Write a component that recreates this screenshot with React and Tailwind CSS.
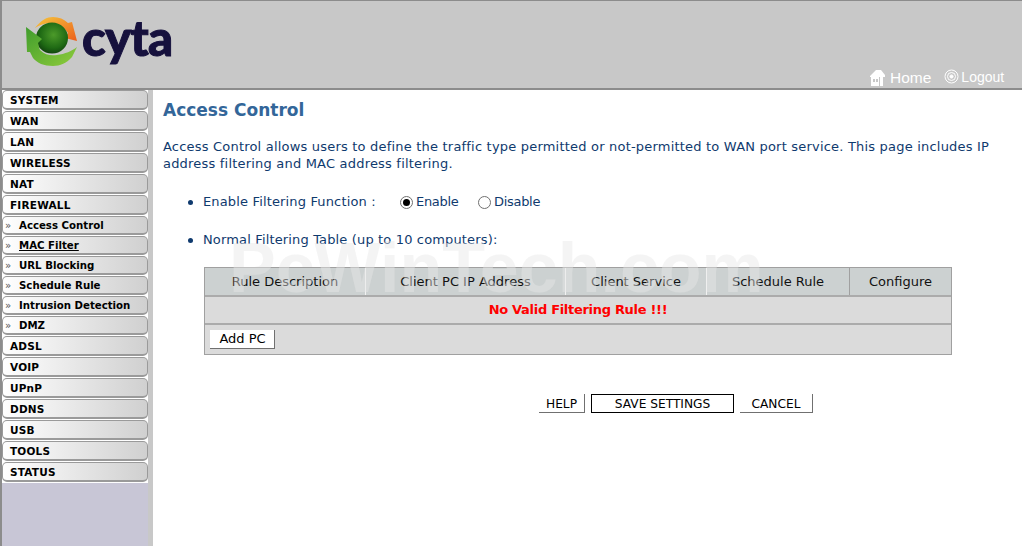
const mainMenu = ["SYSTEM", "WAN", "LAN", "WIRELESS", "NAT", "FIREWALL"];
const subMenu = ["Access Control", "MAC Filter", "URL Blocking", "Schedule Rule", "Intrusion Detection", "DMZ"];
const lowerMenu = ["ADSL", "VOIP", "UPnP", "DDNS", "USB", "TOOLS", "STATUS"];
const columns = [
  { name: "Rule Description", width: "w-[161px]" },
  { name: "Client PC IP Address", width: "w-[200px]" },
  { name: "Client Service", width: "w-[141px]" },
  { name: "Schedule Rule", width: "w-[143px]" },
  { name: "Configure", width: "flex-1" },
];

function Logo() {
  return (
    <div className="flex items-start">
      <svg width="56" height="52" viewBox="0 0 56 52" className="mt-[15px] ml-[23px]">
        <defs>
          <radialGradient id="ball" cx="0.55" cy="0.4" r="0.65">
            <stop offset="0" stopColor="#4c9a2a" />
            <stop offset="0.65" stopColor="#1f6a14" />
            <stop offset="1" stopColor="#0e3d0c" />
          </radialGradient>
          <linearGradient id="orange" x1="0" y1="0" x2="1" y2="1">
            <stop offset="0" stopColor="#f5c63c" />
            <stop offset="1" stopColor="#ec5f1c" />
          </linearGradient>
          <linearGradient id="green" x1="0" y1="0" x2="1" y2="1">
            <stop offset="0" stopColor="#3f9c2c" />
            <stop offset="1" stopColor="#8fcc3c" />
          </linearGradient>
        </defs>
        <path d="M10 12 C16 4 22 1 28 1 C34 1 39 3 43 7 L47 6 L52 25 L40 22 L43 17 C35 5 20 5 10 12 Z" fill="url(#orange)" />
        <ellipse cx="27" cy="22" rx="16" ry="15.5" fill="url(#ball)" />
        <path d="M1 11 L17 23 L13 27 C14 30 14 32 15 34 C20 39 26 40 32 39 C40 38 47 35 52 31 L47 41 C42 47 35 50 28 50 C19 50 12 47 8 42 L5 36 L2 36 Z" fill="url(#green)" />
      </svg>
      <span className="mt-[6px] ml-[1px] font-['Lato',sans-serif] font-black text-[49px] leading-[60px] tracking-[-0.8px] text-[#16113d] [-webkit-text-stroke:1px_#16113d]">cyta</span>
    </div>
  );
}

function MenuItem({ label }) {
  return (
    <div className="h-[21px] pb-[1px]">
      <div className="h-[20px] rounded-[5px] border border-b-2 border-[#9a9a9a] bg-gradient-to-r from-white to-[#d0d0d0] pl-[7px] text-[10.5px] font-bold leading-[19px] tracking-[0.2px] text-black">
        {label}
      </div>
    </div>
  );
}

function SubItem({ label }) {
  return (
    <div className="h-[20px] pb-[1px]">
      <div className="flex h-[19px] items-center rounded-[5px] border border-b-2 border-[#9a9a9a] bg-gradient-to-r from-white to-[#d0d0d0] pt-[1px] pl-[2px] text-[10.2px] font-bold text-black">
        <span className="w-[14px] font-normal text-[#555]">»</span>
        <span className={label === "MAC Filter" ? "underline" : ""}>{label}</span>
      </div>
    </div>
  );
}

function Radio({ checked }) {
  return (
    <span className="flex h-[13px] w-[13px] items-center justify-center rounded-full border border-[#707070] bg-white">
      {checked && <span className="h-[7px] w-[7px] rounded-full bg-black" />}
    </span>
  );
}

export default function App() {
  return (
    <div className="relative h-[546px] w-[1022px] overflow-hidden bg-white font-['DejaVu_Sans',sans-serif]">
      <header className="relative h-[90px] border-t border-b-2 border-l-2 border-[#8c8c8c] bg-[#c8c8c8]">
        <Logo />
        <div className="absolute left-[866px] top-[65px] flex items-center text-white">
          <svg width="18" height="18" viewBox="0 0 18 18" fill="#fff">
            <path d="M2 7 L8 1 L13 1 L17 6 L17 8 L15 8 L15 17 L12 17 L12 8 L11 8 L11 17 L3 17 L3 8 L2 8 Z" />
            <rect x="5" y="10" width="2" height="3" fill="#c8c8c8" />
            <rect x="8" y="10" width="2" height="3" fill="#c8c8c8" />
          </svg>
          <span className="ml-[4px] text-[15.5px] leading-[24px] font-['Liberation_Sans',sans-serif]">Home</span>
          <svg width="15" height="15" viewBox="0 0 15 15" fill="none" stroke="#fff" className="ml-[13px] mt-[-3px]">
            <circle cx="7.5" cy="7.5" r="6.5" />
            <circle cx="7.5" cy="7.5" r="4" />
            <circle cx="7.5" cy="7.5" r="1.6" fill="#fff" />
          </svg>
          <span className="ml-[2px] mt-[-3px] text-[14px] leading-[20px] font-['Liberation_Sans',sans-serif]">Logout</span>
        </div>
      </header>

      <div className="flex h-[456px]">
        <aside className="flex w-[153px] border-l-2 border-[#8c8c8c] bg-[#c8c8c8]">
          <nav className="flex w-[146px] flex-col bg-[#c8c6d6]">
            <div className="bg-white">
              {mainMenu.map((item) => <MenuItem key={item} label={item} />)}
              {subMenu.map((item) => <SubItem key={item} label={item} />)}
              {lowerMenu.map((item) => <MenuItem key={item} label={item} />)}
            </div>
          </nav>
        </aside>

        <main className="flex-1 pl-[10px] text-[13px] text-[#0f3a6e]">
          <h1 className="mt-[9px] text-[17px] font-bold leading-[22px] text-[#336699]">Access Control</h1>
          <p className="mt-[17px] w-[850px] leading-[17px] tracking-[0.2px]">
            Access Control allows users to define the traffic type permitted or not-permitted to WAN port service. This page includes IP address filtering and MAC address filtering.
          </p>

          <div className="mt-[20px] flex h-[20px] items-center tracking-[0.15px]">
            <span className="ml-[25px] h-[5px] w-[5px] rounded-full bg-[#0f3a6e]" />
            <span className="ml-[10px] w-[197px]">Enable Filtering Function :</span>
            <Radio checked />
            <span className="ml-[3px] w-[62px] tracking-[-0.3px]">Enable</span>
            <Radio />
            <span className="ml-[3px] tracking-[-0.3px]">Disable</span>
          </div>
          <div className="mt-[18px] flex h-[20px] items-center tracking-[0.15px]">
            <span className="ml-[25px] h-[5px] w-[5px] rounded-full bg-[#0f3a6e]" />
            <span className="ml-[10px]">Normal Filtering Table (up to 10 computers):</span>
          </div>

          <div className="ml-[41px] mt-[17px] w-[748px] border border-[#a0a0a0] bg-[#dbdbdb] text-[#111]">
            <div className="flex h-[27px] bg-[#ccd1d1]">
              {columns.map((col, i) => (
                <div key={col.name} className={`${col.width} flex items-center justify-center ${i < 4 ? "border-r border-[#f2f2f2]" : ""} ${i === 3 ? "border-r-[#a0a0a0]" : ""}`}>
                  {col.name}
                </div>
              ))}
            </div>
            <div className="flex h-[28px] items-center justify-center border-t-2 border-[#ababab] font-bold tracking-[-0.3px] text-[#ff0000]">
              No Valid Filtering Rule !!!
            </div>
            <div className="flex h-[31px] items-center border-t-2 border-[#ababab] pl-[5px]">
              <button className="h-[19px] w-[65px] border-r border-b border-[#707070] bg-white pl-[1px] leading-[16px] text-black">Add PC</button>
            </div>
          </div>

          <div className="ml-[376px] mt-[39px] flex items-start text-[12.2px] text-black">
            <button className="h-[19px] w-[46px] border-r border-b border-[#707070] bg-white pt-[1px] leading-[18px]">HELP</button>
            <button className="ml-[6px] h-[19px] w-[143px] border-[1.5px] border-black bg-white leading-[16px]">SAVE SETTINGS</button>
            <button className="ml-[6px] h-[19px] w-[73px] border-r border-b border-[#707070] bg-white pt-[1px] leading-[18px]">CANCEL</button>
          </div>
        </main>
      </div>

      <div className="pointer-events-none absolute left-[229px] top-[228px] whitespace-nowrap font-['Liberation_Sans',sans-serif] text-[70px] font-bold leading-[80px] text-[#e6e6e6]/45">
        PcWinTech.com
      </div>
    </div>
  );
}
